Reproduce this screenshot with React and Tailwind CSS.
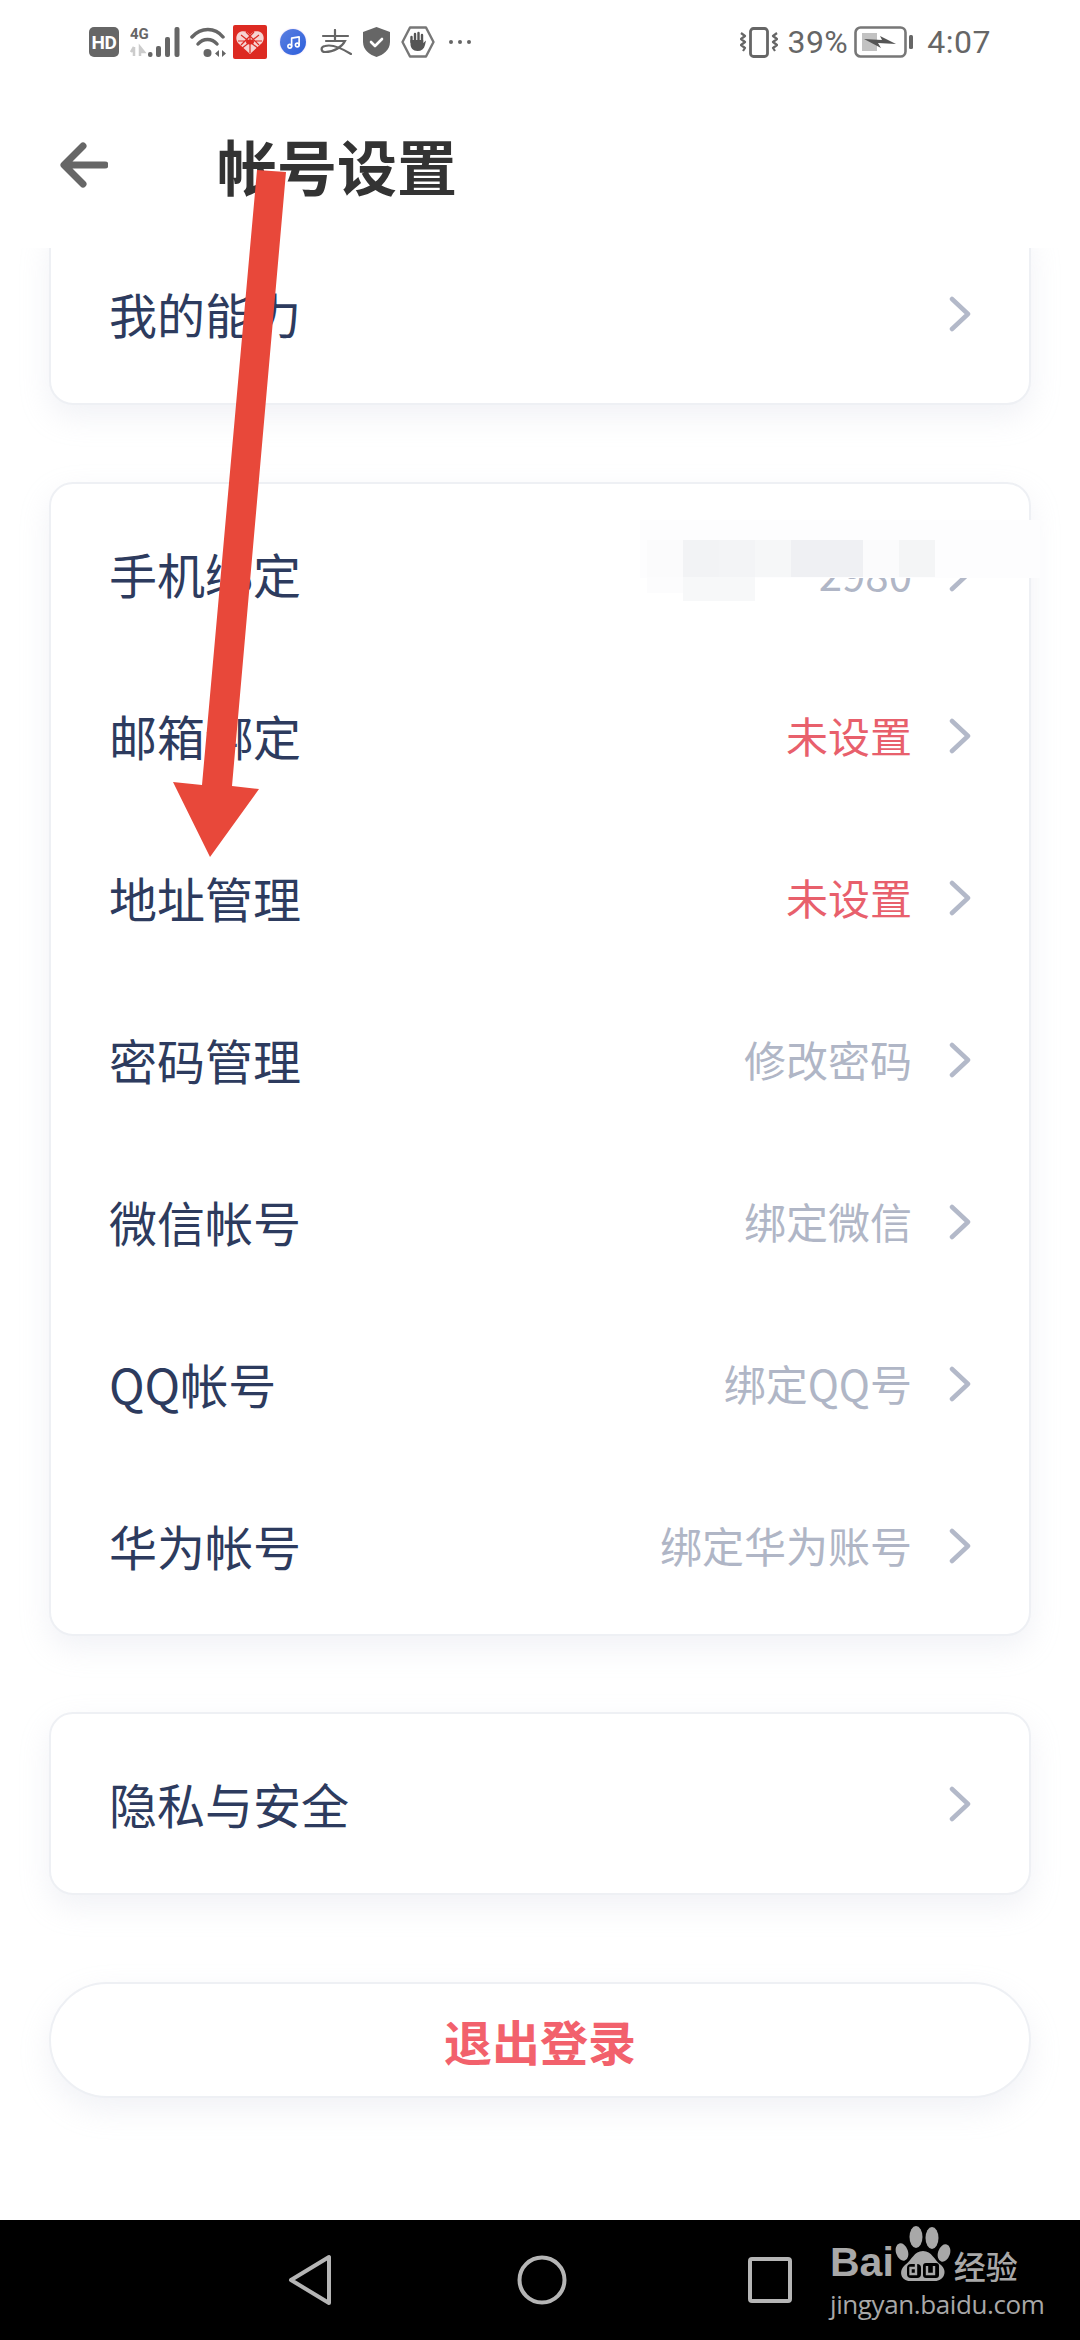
import React from 'react';
import { Music } from 'lucide-react';

const rows = [
  { label: '手机绑定', value: '2980', tone: 'muted' },
  { label: '邮箱绑定', value: '未设置', tone: 'alert' },
  { label: '地址管理', value: '未设置', tone: 'alert' },
  { label: '密码管理', value: '修改密码', tone: 'muted' },
  { label: '微信帐号', value: '绑定微信', tone: 'muted' },
  { label: 'QQ帐号', value: '绑定QQ号', tone: 'muted' },
  { label: '华为帐号', value: '绑定华为账号', tone: 'muted' },
];

const blurTop = ['bg-[#fbfbfc]', 'bg-[#f2f3f5]', 'bg-[#f3f4f6]', 'bg-[#f6f7f8]', 'bg-[#eff0f3]', 'bg-[#eff0f3]', 'bg-[#fbfbfc]', 'bg-[#f4f5f6]'];

function Chevron() {
  return (
    <svg className="w-[22px] h-[36px] shrink-0" viewBox="0 0 22 36" fill="none" stroke="#b3b9c9" strokeWidth="4.5" strokeLinecap="round" strokeLinejoin="round">
      <polyline points="3,3 19,18 3,33" />
    </svg>
  );
}

function Row({ label, value, tone }) {
  return (
    <div className="h-[162px] flex items-center pl-[58px] pr-[58px]">
      <span className="flex-1 text-[48px] text-[#2d3b5e] leading-none pb-[2px]">{label}</span>
      {value && (
        <span className={`text-[42px] leading-none mr-[37px] pb-[2px] ${tone === 'alert' ? 'text-[#e8606c]' : 'text-[#b0b6c6]'}`}>{value}</span>
      )}
      <Chevron />
    </div>
  );
}

function Card({ children, className = '' }) {
  return (
    <div className={`bg-white border-2 border-[#eef0f4] rounded-[24px] shadow-[0_12px_30px_rgba(190,198,215,0.22)] ${className}`}>
      {children}
    </div>
  );
}

function StatusBar() {
  return (
    <div className="h-[84px] shrink-0 flex items-center justify-between pl-[89px] pr-[89px] text-[#666666]">
      <div className="flex items-center">
        {/* HD */}
        <div className="w-[30px] h-[30px] rounded-[5px] bg-[#666666] flex items-center justify-center text-white text-[19px] font-bold leading-none tracking-[-0.5px] font-['Roboto',sans-serif]">HD</div>
        {/* 4G + signal */}
        <svg className="ml-[11px]" width="50" height="32" viewBox="0 0 50 32">
          <text x="0" y="13" fontSize="15" fontWeight="700" fill="#666" fontFamily="Roboto, sans-serif">4G</text>
          <path d="M4 21v9M1 26l3-5M10 30v-9l4 5-4 0" stroke="#ccc" strokeWidth="2.5" fill="none" />
          <rect x="18" y="26" width="4.5" height="5" rx="2" fill="#666" />
          <rect x="26" y="20" width="5" height="11" rx="2" fill="#666" />
          <rect x="35" y="11" width="5" height="20" rx="2" fill="#666" />
          <rect x="44.5" y="1" width="5" height="30" rx="2" fill="#666" />
        </svg>
        {/* wifi */}
        <svg className="ml-[10px]" width="38" height="32" viewBox="0 0 38 32" fill="none">
          <path d="M2 11C11 1 25 1 33 11" stroke="#666" strokeWidth="3.5" strokeLinecap="round" />
          <path d="M8 18C13 12 22 12 27 18" stroke="#666" strokeWidth="3.5" strokeLinecap="round" />
          <circle cx="17.5" cy="27" r="4" fill="#666" />
          <path d="M29 24v7l-4-3.5zM32 24v7l4-3.5z" fill="#666" />
        </svg>
        {/* pinduoduo */}
        <svg className="ml-[5px]" width="34" height="34" viewBox="0 0 34 34">
          <rect width="34" height="34" rx="2" fill="#dd2a22" />
          <path d="M17 29L5 18C2 14 3 8 8 6.500C12 5.500 15 7 17 10C19 7 22 5.500 26 6.500C31 8 32 14 29 18Z" fill="#f6d4d2" />
          <path d="M8 10l18 14M26 10L8 24M13 7l13 13M21 7L8 20M17 10v18M5 16h24" stroke="#dd2a22" strokeWidth="1.2" />
          <ellipse cx="17" cy="17" rx="4" ry="2.500" fill="#dd2a22" />
        </svg>
        {/* music */}
        <div className="ml-[13px] w-[26px] h-[26px] rounded-full bg-[linear-gradient(135deg,#5b7fe0,#2c5fdc)] shadow-[0_0_2px_#e3c8f5] flex items-center justify-center">
          <Music size={15} color="#ffffff" strokeWidth={2.6} />
        </div>
        {/* alipay */}
        <svg className="ml-[14px]" width="32" height="26" viewBox="0 0 32 26" fill="none" stroke="#666" strokeWidth="2.2" strokeLinecap="round">
          <path d="M3 7H28M15 1V11M6 12H25C22 18 14 23 5 23C1 23 0 18 5 17C12 15 23 20 31 25" />
        </svg>
        {/* shield */}
        <svg className="ml-[11px]" width="27" height="30" viewBox="0 0 27 30">
          <path d="M13.500 0L27 5V15C27 23 20 28 13.500 30C7 28 0 23 0 15V5Z" fill="#666" />
          <path d="M8 15l4 4 7-7" stroke="#fff" strokeWidth="2.600" fill="none" strokeLinecap="round" strokeLinejoin="round" />
        </svg>
        {/* hand in hexagon */}
        <svg className="ml-[11px]" width="34" height="32" viewBox="0 0 34 32" fill="none">
          <path d="M9 1.500H25L32.500 16L25 30.500H9L1.500 16Z" stroke="#777" strokeWidth="2.400" strokeLinejoin="round" />
          <path d="M10.500 16V11M14 16V8M17.500 16V7M21 16V9" stroke="#555" strokeWidth="2.400" strokeLinecap="round" />
          <path d="M9.500 14H22.200V17L25 14.500L24 19C23 23 20.500 25 16.500 25C12 25 9.500 22 9.500 18Z" fill="#555" />
        </svg>
        {/* overflow dots */}
        <div className="ml-[14px] flex items-center gap-[5px]">
          <span className="w-[4px] h-[4px] rounded-full bg-[#666666]" />
          <span className="w-[4px] h-[4px] rounded-full bg-[#666666]" />
          <span className="w-[4px] h-[4px] rounded-full bg-[#666666]" />
        </div>
      </div>

      <div className="flex items-center font-['Roboto',sans-serif]">
        {/* vibrate */}
        <svg width="38" height="31" viewBox="0 0 38 31" fill="none" stroke="#666" strokeWidth="2.400" strokeLinejoin="round">
          <rect x="10.500" y="1.500" width="17" height="28" rx="3" strokeWidth="2.800" />
          <path d="M1 6l4 3-4 3 4 3-4 3 4 3-2 3M37 6l-4 3 4 3-4 3 4 3-4 3 2 3" strokeWidth="2.200" />
        </svg>
        <span className="ml-[9px] text-[32px] leading-none tracking-[0.5px]">39%</span>
        {/* battery */}
        <svg className="ml-[6px]" width="60" height="32" viewBox="0 0 60 32" fill="none">
          <rect x="1.500" y="1.500" width="50" height="29" rx="5" stroke="#777" strokeWidth="2.600" />
          <rect x="8" y="7" width="15" height="18" fill="#c2c2c2" />
          <path d="M10 13L28 14L26 10L42 18L24 17L27 22Z" fill="#555" />
          <rect x="55" y="9" width="4" height="14" rx="1.500" fill="#666" />
        </svg>
        <span className="ml-[13px] text-[32px] leading-none tracking-[0.5px]">4:07</span>
      </div>
    </div>
  );
}

function Watermark() {
  return (
    <div className="absolute left-[830px] top-[2225px] w-[192px] text-[#a8a8a8]">
      <div className="flex items-end h-[57px]">
        <span className="text-[41px] font-bold leading-none mb-[-1px] font-['Liberation_Sans',sans-serif]">Bai</span>
        <svg className="ml-[1px] shrink-0" width="56" height="57" viewBox="0 0 56 57">
          <ellipse cx="7" cy="27" rx="6" ry="9" transform="rotate(-18 7 27)" fill="#a8a8a8" />
          <ellipse cx="21" cy="12" rx="6.500" ry="11" fill="#a8a8a8" />
          <ellipse cx="37" cy="13" rx="6.500" ry="11" fill="#a8a8a8" />
          <ellipse cx="49" cy="28" rx="6" ry="9" transform="rotate(18 49 28)" fill="#a8a8a8" />
          <path d="M28 26C37 26 39 35 46 40C53 46 49 56 40 56H15C6 56 3 46 10 40C17 35 19 26 28 26Z" fill="#a8a8a8" />
          <rect x="12" y="39" width="14" height="14" rx="4" fill="#000" />
          <rect x="28" y="38" width="16" height="15" rx="3" fill="#000" />
          <path d="M21 36V49H15.500V43H21M32 41V49H39V41" stroke="#a8a8a8" strokeWidth="2.400" fill="none" />
        </svg>
        <span className="ml-[3px] text-[32px] font-medium leading-none mb-[1px]">经验</span>
      </div>
      <div className="mt-[9px] text-[26px] leading-none whitespace-nowrap font-['Open_Sans',sans-serif] tracking-[-0.4px]">jingyan.baidu.com</div>
    </div>
  );
}

export default function App() {
  return (
    <div className="relative w-[1080px] h-[2340px] bg-white flex flex-col overflow-hidden font-['Noto_Sans_CJK_SC','Noto_Sans',sans-serif]">
      <StatusBar />

      {/* Header */}
      <div className="h-[164px] shrink-0 flex items-center pl-[60px] pb-[2px]">
        <svg width="48" height="46" viewBox="0 0 48 46" fill="none" stroke="#666666" strokeWidth="7" strokeLinecap="round" strokeLinejoin="round">
          <path d="M45 23H5M23 4L4 23L23 42" />
        </svg>
        <h1 className="ml-[109px] text-[60px] font-bold text-[#333333] leading-none">帐号设置</h1>
      </div>

      {/* Scrolled content */}
      <div className="flex-1 overflow-hidden px-[49px]">
        <Card className="-mt-[26px] pt-[9px] pb-[8px]">
          <Row label="我的能力" />
        </Card>

        <Card className="mt-[77px] pt-[9px] pb-[7px]">
          {rows.map(r => <Row key={r.label} {...r} />)}
        </Card>

        <Card className="mt-[76px] h-[183px] flex flex-col justify-center">
          <Row label="隐私与安全" />
        </Card>

        <button className="mt-[87px] w-full h-[116px] bg-white border-2 border-[#eef0f4] rounded-full shadow-[0_12px_30px_rgba(190,198,215,0.22)] text-[48px] font-bold text-[#f2616c] leading-none">
          退出登录
        </button>
      </div>

      {/* Nav bar */}
      <div className="h-[120px] shrink-0 bg-black flex items-center justify-center">
        <svg width="44" height="52" viewBox="0 0 44 52" fill="none" stroke="#b5b5b5" strokeWidth="4" strokeLinejoin="round">
          <path d="M41 3V49L3 26Z" />
        </svg>
        <svg className="ml-[185px]" width="50" height="50" viewBox="0 0 50 50" fill="none" stroke="#b5b5b5" strokeWidth="4">
          <circle cx="25" cy="25" r="22.500" />
        </svg>
        <svg className="ml-[181px]" width="44" height="46" viewBox="0 0 44 46" fill="none" stroke="#b5b5b5" strokeWidth="4">
          <rect x="2" y="2" width="40" height="42" rx="2" />
        </svg>
      </div>

      {/* Redaction over the phone number */}
      <div className="absolute left-[640px] top-[520px] w-[400px] h-[58px] bg-[#fdfdfe]" />
      <div className="absolute left-[647px] top-[540px] flex">
        {blurTop.map((c, i) => <div key={i} className={`w-[36px] h-[37px] ${c}`} />)}
      </div>
      <div className="absolute left-[647px] top-[577px] flex">
        <div className="w-[36px] h-[16px] bg-[#fcfcfd]" />
        <div className="w-[72px] h-[24px] bg-[#f7f8f9]" />
      </div>

      {/* Annotation arrow */}
      <svg className="absolute left-0 top-0 pointer-events-none" width="1080" height="900" viewBox="0 0 1080 900">
        <polygon points="257,170 286,172 232,786 259,789 210,857 173,782 202,785" fill="#e8483a" />
      </svg>

      <Watermark />
    </div>
  );
}
